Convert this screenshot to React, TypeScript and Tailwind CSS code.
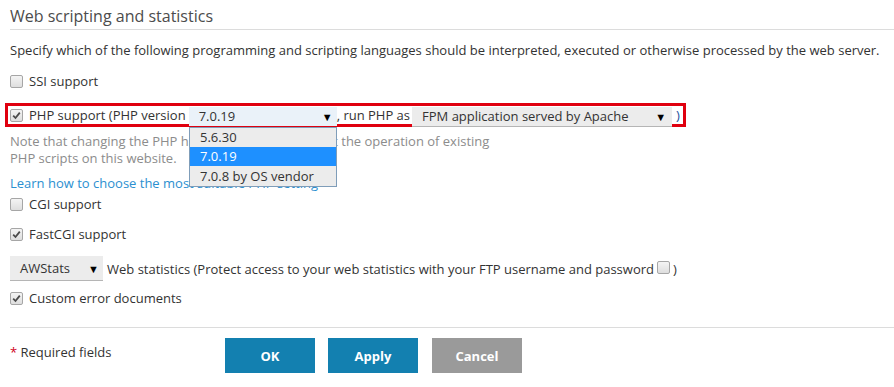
import React from 'react';

const Check: React.FC<{ checked?: boolean }> = ({ checked }) => (
  <span className="inline-flex w-[13px] h-[13px] shrink-0 items-center justify-center rounded-[2px] border border-[#a6a6a6] bg-gradient-to-b from-[#f4f4f4] to-[#dedede]">
    {checked && (
      <svg width="9" height="9" viewBox="0 0 9 9">
        <path d="M1.2 4.6 L3.5 7 L7.8 1.6" fill="none" stroke="#4a4a4a" strokeWidth="1.8" />
      </svg>
    )}
  </span>
);

const Arrow = () => <span className="text-[11px] text-black leading-none">▼</span>;

const CheckRow: React.FC<{ checked?: boolean; label: string; className?: string }> = ({ checked, label, className }) => (
  <div className={`flex items-center h-[18px] gap-[6px] ${className ?? ''}`}>
    <Check checked={checked} />
    <span>{label}</span>
  </div>
);

export default function App() {
  return (
    <div className="w-[894px] h-[387px] overflow-hidden bg-white pl-[10px] text-[13px] text-[#333] leading-[18px]" style={{ fontFamily: '"Open Sans", sans-serif' }}>
      {/* Section title */}
      <div className="h-[30px] pt-[5px] border-b border-[#dcdcdc] text-[16px] leading-[22px] text-[#4c4c4c]">
        Web scripting and statistics
      </div>

      <p className="mt-[11px]">
        Specify which of the following programming and scripting languages should be interpreted, executed or otherwise processed by the web server.
      </p>

      <CheckRow label="SSI support" className="mt-[13px]" />

      {/* PHP row with highlight */}
      <div className="relative mt-[13px] -ml-[5px] w-[681px]">
        <div className="flex items-center h-[24px] border-[3px] border-[#e0000f] pl-[2px] whitespace-nowrap">
          <Check checked />
          <span className="ml-[6px] shrink-0">PHP support (PHP version</span>
          <div className="ml-[3px] shrink-0 flex items-center justify-between w-[148px] h-[19px] mt-[2px] bg-[#eaf2f9] pl-[10px] pr-[4px]">
            <span>7.0.19</span>
            <Arrow />
          </div>
          <span className="shrink-0">, run PHP as</span>
          <div className="ml-[2px] shrink-0 flex items-center justify-between w-[260px] h-[20px] mt-[3px] bg-[#ececec] border-b border-[#b5b5b5] pl-[10px] pr-[6px]">
            <span>FPM application served by Apache</span>
            <Arrow />
          </div>
          <span className="ml-[4px] shrink-0 text-[#1a4f9c]">)</span>
        </div>

        {/* open dropdown */}
        <div className="absolute left-[184px] top-[24px] w-[148px] border border-[#7f9db9] bg-[#ececec] z-10">
          <div className="h-[19px] pl-[10px] leading-[19px]">5.6.30</div>
          <div className="h-[19px] pl-[10px] leading-[19px] bg-[#1e90ff] text-white">7.0.19</div>
          <div className="h-[20px] pl-[10px] leading-[20px]">7.0.8 by OS vendor</div>
        </div>
      </div>

      <p className="mt-[6px] w-[488px] text-[#8c8c8c] leading-[17px]">
        Note that changing the PHP handler version can affect the operation of existing PHP scripts on this website.
      </p>
      <div className="mt-[7px] text-[#2b8fd0]">Learn how to choose the most suitable PHP setting</div>

      <CheckRow label="CGI support" className="mt-[3px]" />
      <CheckRow checked label="FastCGI support" className="mt-[12px]" />

      <div className="flex items-center mt-[13px] h-[25px]">
        <div className="flex items-center justify-between w-[93px] h-[25px] bg-[#ececec] border-b border-[#b5b5b5] pl-[10px] pr-[4px]">
          <span>AWStats</span>
          <Arrow />
        </div>
        <span className="ml-[4px]">Web statistics (Protect access to your web statistics with your FTP username and password</span>
        <span className="ml-[3px]"><Check /></span>
        <span className="ml-[3px]">)</span>
      </div>

      <CheckRow checked label="Custom error documents" className="mt-[8px]" />

      <div className="mt-[20px] border-t border-[#dcdcdc] flex">
        <div className="pt-[15px] w-[215px]">
          <span className="text-[#d0021b]">*</span> Required fields
        </div>
        <div className="flex gap-[13px] pt-[10px]">
          <button className="w-[90px] h-[35px] bg-[#1380b0] text-white font-bold">OK</button>
          <button className="w-[90px] h-[35px] bg-[#1380b0] text-white font-bold">Apply</button>
          <button className="w-[90px] h-[35px] bg-[#9a9a9a] text-white font-bold ml-[1px]">Cancel</button>
        </div>
      </div>
    </div>
  );
}
